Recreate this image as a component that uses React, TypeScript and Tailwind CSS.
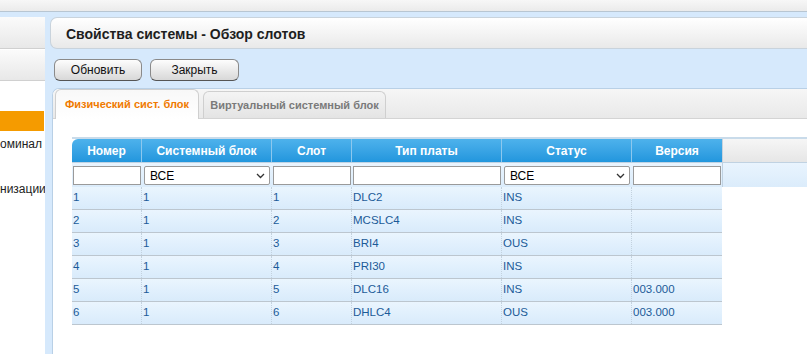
import React from "react";

const rows = [
  ["1", "1", "1", "DLC2", "INS", ""],
  ["2", "1", "2", "MCSLC4", "INS", ""],
  ["3", "1", "3", "BRI4", "OUS", ""],
  ["4", "1", "4", "PRI30", "INS", ""],
  ["5", "1", "5", "DLC16", "INS", "003.000"],
  ["6", "1", "6", "DHLC4", "OUS", "003.000"],
];

const widths = ["w-[70px]", "w-[130px]", "w-[80px]", "w-[150px]", "w-[130px]", "w-[90px]"];
const heads = ["Номер", "Системный блок", "Слот", "Тип платы", "Статус", "Версия"];

function Chevron() {
  return (
    <svg width="9" height="6" viewBox="0 0 9 6" className="shrink-0">
      <path d="M1 1 L4.5 4.5 L8 1" fill="none" stroke="#333" strokeWidth="1.3" />
    </svg>
  );
}

function Select() {
  return (
    <div className="h-[19px] w-full bg-white border border-[#9a9a9a] rounded-[2px] flex items-center justify-between pl-[5px] pr-[4px] text-[12px] text-black">
      <span>ВСЕ</span>
      <Chevron />
    </div>
  );
}

function Input() {
  return <div className="h-[19px] w-full bg-white border border-[#9a9a9a]" />;
}

export default function App() {
  return (
    <div
      className="w-[807px] h-[354px] overflow-hidden bg-[#d6e9fc] flex flex-col"
      style={{ fontFamily: '"Liberation Sans", Arial, sans-serif' }}
    >
      <div className="h-[12px] shrink-0 bg-gradient-to-b from-[#f7f7f7] to-[#ebebeb] border-b border-[#b8c6d2]" />
      <div className="flex flex-1 min-h-0 pt-[5px]">
        {/* sidebar */}
        <div className="w-[45px] shrink-0 bg-white flex flex-col overflow-hidden">
          <div className="h-[32px] bg-gradient-to-b from-[#fbfbfb] to-[#e8e8e8] border-b border-[#d0d0d0]" />
          <div className="h-[31px] mt-[1px] bg-gradient-to-b from-[#fbfbfb] to-[#e8e8e8] border-b border-[#d0d0d0]" />
          <div className="h-[30px]" />
          <div className="h-[20px] bg-[#f59b00] mr-[1px]" />
          <div className="text-[12px] text-[#222] leading-[14px] mt-[6px] whitespace-nowrap">оминал</div>
          <div className="text-[12px] text-[#222] leading-[14px] mt-[31px] whitespace-nowrap">низации</div>
        </div>
        <div className="w-[5px] shrink-0" />
        {/* main */}
        <div className="flex-1 min-w-0 flex flex-col">
          <div className="h-[32px] shrink-0 rounded-l-[7px] bg-gradient-to-b from-white to-[#e9e9e9] border border-r-0 border-[#c9d3dc] flex items-center pl-[15px] pt-[2px]">
            <span className="text-[14px] font-bold text-[#1e1e1e]">Свойства системы - Обзор слотов</span>
          </div>
          <div className="h-[39px] shrink-0 flex items-center gap-[8px] pl-[4px] pt-[3px]">
            <button className="w-[88px] h-[22px] rounded-[6px] border border-[#8a8a8a] border-b-[#555] bg-gradient-to-b from-[#fdfdfd] to-[#d8d8d8] text-[12px] text-[#111] leading-none">
              Обновить
            </button>
            <button className="w-[89px] h-[22px] rounded-[6px] border border-[#8a8a8a] border-b-[#555] bg-gradient-to-b from-[#fdfdfd] to-[#d8d8d8] text-[12px] text-[#111] leading-none">
              Закрыть
            </button>
          </div>
          <div className="flex-1 min-h-0 ml-[2px] rounded-tl-[7px] border-l border-t border-[#b9d0e6] bg-white flex flex-col overflow-hidden">
            <div className="h-[30px] shrink-0 bg-gradient-to-b from-[#f6f6f6] to-[#e9e9e9] border-b border-[#d4d4d4] flex items-end pl-[2px] gap-[4px]">
              <div className="w-[144px] rounded-t-[6px] border border-b-0 border-[#cfcfcf] bg-gradient-to-b from-[#f8f8f8] to-white flex items-center justify-center -mb-[1px] h-[30px]">
                <span className="text-[11px] font-bold text-[#f07a00]">Физический сист. блок</span>
              </div>
              <div className="h-[27px] w-[183px] rounded-t-[6px] border border-b-0 border-[#cfcfcf] bg-gradient-to-b from-[#f4f4f4] to-[#e4e4e4] flex items-center justify-center">
                <span className="text-[11px] font-bold text-[#7a7a7a]">Виртуальный системный блок</span>
              </div>
            </div>
            <div className="flex-1 pl-[19px] pt-[18px]">
              {/* header */}
              <div className="flex h-[25px] border-t-[2px] border-[#c9dbea]">
                <div className="flex rounded-tl-[6px] overflow-hidden">
                  {heads.map((h, i) => (
                    <div
                      key={h}
                      className={`${widths[i]} shrink-0 h-full bg-gradient-to-b from-[#4db2ec] to-[#2196dd] flex items-center justify-center text-[12px] font-bold text-white ${i < 5 ? "border-r border-[#8cc8ee]" : ""}`}
                    >
                      {h}
                    </div>
                  ))}
                </div>
                <div className="flex-1 bg-gradient-to-b from-[#f6f6f6] to-[#e6e6e6] border-l border-[#c8d2dc]" />
              </div>
              {/* filter row */}
              <div className="flex h-[25px] bg-gradient-to-b from-[#e9f4fe] to-[#dbecfb] border-t border-[#c0d2e2]">
                {widths.map((w, i) => (
                  <div key={i} className={`${w} shrink-0 flex items-center px-[1px] pt-[1px]`}>
                    {i === 1 || i === 4 ? (
                      <div className="w-full pl-[1px] pr-[1px]"><Select /></div>
                    ) : (
                      <Input />
                    )}
                  </div>
                ))}
                <div className="flex-1 border-l border-[#c0d2e2]" />
              </div>
              {/* data rows */}
              <div className="w-[650px]">
                {rows.map((r, ri) => (
                  <div
                    key={ri}
                    className="flex h-[23px] bg-gradient-to-b from-[#eaf5fe] via-[#e1f0fd] to-[#d9ebfb] border-b border-[#bcc6cf]"
                  >
                    {r.map((c, ci) => (
                      <div
                        key={ci}
                        className={`${widths[ci]} shrink-0 flex items-center pl-[1px] text-[11.5px] text-[#1c5b98] ${ci < 5 ? "border-r border-dotted border-[#c3d2df]" : ""}`}
                      >
                        {c}
                      </div>
                    ))}
                  </div>
                ))}
              </div>
            </div>
          </div>
        </div>
      </div>
    </div>
  );
}
